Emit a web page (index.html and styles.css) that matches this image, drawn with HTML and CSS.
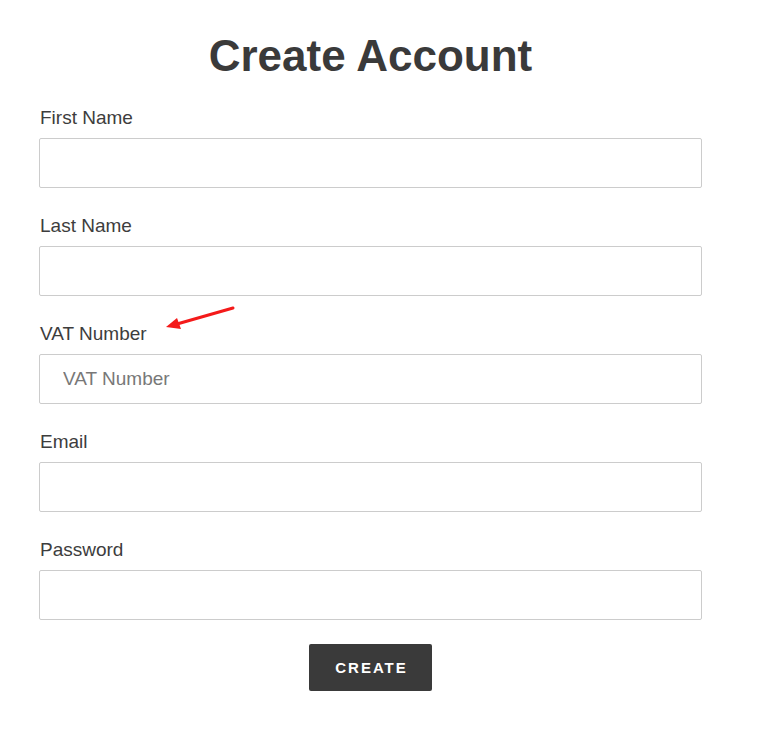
FILE: index.html
```html
<!DOCTYPE html>
<html>
<head>
<meta charset="utf-8">
<link rel="stylesheet" href="styles.css">
</head>
<body>
<div class="page">
  <h1 class="title">Create Account</h1>
  <form class="form">
    <label class="label">First Name</label>
    <input class="field" type="text">
    <label class="label">Last Name</label>
    <input class="field" type="text">
    <div class="vat-wrap">
      <label class="label">VAT Number</label>
      <svg class="arrow" width="80" height="30" viewBox="0 0 80 30">
        <line x1="69" y1="4" x2="13" y2="20" stroke="#f41a1a" stroke-width="3" stroke-linecap="round"/>
        <polygon points="2,23 13,14 17,25" fill="#f41a1a"/>
      </svg>
    </div>
    <input class="field" type="text" placeholder="VAT Number">
    <label class="label">Email</label>
    <input class="field" type="email">
    <label class="label">Password</label>
    <input class="field" type="password">
    <div class="actions">
      <button class="btn" type="button">Create</button>
    </div>
  </form>
</div>
</body>
</html>
```
FILE: styles.css
```css
html, body {
  margin: 0;
  padding: 0;
  background: #ffffff;
}
body {
  font-family: "Liberation Sans", Arial, Helvetica, sans-serif;
  color: #3d3d3d;
}
.page {
  width: 663px;
  padding: 30px 0 0 39px;
}
.title {
  margin: 0;
  font-size: 44px;
  line-height: 1.2;
  font-weight: bold;
  text-align: center;
  color: #3a3a3a;
}
.form {
  display: flex;
  flex-direction: column;
  margin-top: 24px;
}
.label {
  display: block;
  font-size: 19px;
  line-height: 22px;
  padding-left: 1px;
  margin-bottom: 9px;
  color: #3d3d3d;
}
.vat-wrap {
  position: relative;
}
.arrow {
  position: absolute;
  left: 125px;
  top: -19px;
}
.field {
  box-sizing: border-box;
  height: 50px;
  width: 663px;
  margin: 0 0 27px 0;
  border: 1px solid #cccccc;
  border-radius: 2px;
  padding: 0 23px;
  font-family: "Liberation Sans", Arial, sans-serif;
  font-size: 19px;
  color: #3d3d3d;
  background: #fff;
  outline: none;
}
.field::placeholder {
  color: #787878;
}
.actions {
  display: flex;
  justify-content: center;
  margin-top: -3px;
}
.btn {
  width: 123px;
  height: 47px;
  background: #3a3a3a;
  color: #ffffff;
  border: none;
  border-radius: 2px;
  font-family: "Liberation Sans", Arial, sans-serif;
  font-weight: bold;
  font-size: 15px;
  letter-spacing: 2px;
  text-transform: uppercase;
  padding: 0 0 0 2px;
}
```
